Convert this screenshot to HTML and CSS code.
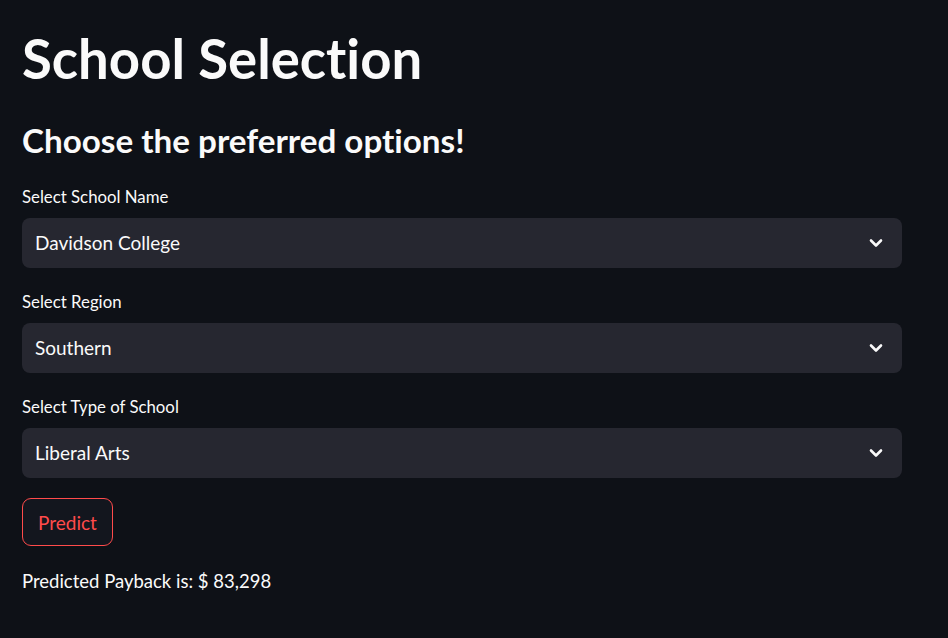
FILE: index.html
```html
<!DOCTYPE html>
<html>
<head>
<meta charset="utf-8">
<link rel="stylesheet" href="styles.css">
</head>
<body>
<main class="page">
  <h1 class="title">School Selection</h1>
  <h2 class="subtitle">Choose the preferred options!</h2>

  <div class="field">
    <label class="label">Select School Name</label>
    <div class="select">
      <span class="value">Davidson College</span>
      <svg class="chev" width="14" height="10" viewBox="0 0 14 10"><polyline points="2,2.5 7,7.5 12,2.5" fill="none" stroke="#fafafa" stroke-width="2.6" stroke-linecap="round" stroke-linejoin="round"/></svg>
    </div>
  </div>

  <div class="field">
    <label class="label">Select Region</label>
    <div class="select">
      <span class="value">Southern</span>
      <svg class="chev" width="14" height="10" viewBox="0 0 14 10"><polyline points="2,2.5 7,7.5 12,2.5" fill="none" stroke="#fafafa" stroke-width="2.6" stroke-linecap="round" stroke-linejoin="round"/></svg>
    </div>
  </div>

  <div class="field">
    <label class="label">Select Type of School</label>
    <div class="select">
      <span class="value">Liberal Arts</span>
      <svg class="chev" width="14" height="10" viewBox="0 0 14 10"><polyline points="2,2.5 7,7.5 12,2.5" fill="none" stroke="#fafafa" stroke-width="2.6" stroke-linecap="round" stroke-linejoin="round"/></svg>
    </div>
  </div>

  <button class="btn">Predict</button>

  <p class="result">Predicted Payback is: $ 83,298</p>
</main>
</body>
</html>
```

FILE: styles.css
```css
html, body {
  margin: 0;
  padding: 0;
  background: #0e1117;
}
body {
  color: #fafafa;
  font-family: Lato, "Noto Sans", sans-serif;
  font-variant-ligatures: none;
  font-feature-settings: "liga" 0, "clig" 0;
}
.page {
  display: flex;
  flex-direction: column;
  align-items: flex-start;
  padding: 26px 46px 0 22px;
}
.title {
  margin: 0;
  font-size: 54.5px;
  line-height: 1.2;
  font-weight: 700;
}
.subtitle {
  margin: 30px 0 0 0;
  font-size: 33.2px;
  line-height: 1.2;
  font-weight: 700;
}
.field {
  align-self: stretch;
  display: flex;
  flex-direction: column;
  gap: 10px;
  margin-top: 25px;
}
.field + .field {
  margin-top: 23.5px;
}
.label {
  font-size: 16.8px;
  line-height: 21.6px;
}
.select {
  height: 50px;
  box-sizing: border-box;
  background: #262730;
  border-radius: 8px;
  display: flex;
  align-items: center;
  justify-content: space-between;
  padding: 0 19px 0 13px;
}
.value {
  font-size: 19px;
  line-height: 24px;
}
.chev {
  display: block;
}
.btn {
  margin-top: 20px;
  height: 48px;
  padding: 0 15px;
  background: #13161e;
  border: 1px solid #ff4b4b;
  border-radius: 9px;
  color: #ff4b4b;
  font-family: inherit;
  font-size: 19px;
  font-variant-ligatures: none;
}
.result {
  margin: 23px 0 0 0;
  font-size: 18.5px;
  line-height: 24px;
}
```
